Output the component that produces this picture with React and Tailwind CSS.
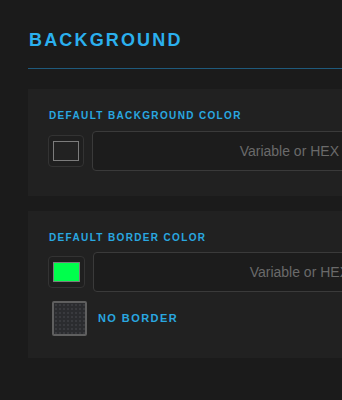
export default function App() {
  return (
    <div
      className="min-h-[400px] w-[342px] overflow-hidden bg-[#1b1b1b] pl-[28px] pt-[31px]"
      style={{ fontFamily: '"Liberation Sans", Arial, sans-serif' }}
    >
      {/* ── Section title ── */}
      <div className="border-b border-[#1f5a7c] pb-[19px] pl-px">
        <h2 className="text-[18px] font-bold leading-[18px] tracking-[0.12em] text-[#2bb0ee]">BACKGROUND</h2>
      </div>

      {/* ── Background color card ── */}
      <div className="mt-[20px] w-[400px] bg-[#212121] pb-[25px] pl-[20px] pt-[21px]">
        <p className="pl-px text-[10px] font-bold leading-[12px] tracking-[0.135em] text-[#29a8e0]">DEFAULT BACKGROUND COLOR</p>
        <div className="mt-[9px] flex items-center gap-[8px]">
          <button className="flex h-[32px] w-[36px] flex-shrink-0 items-center justify-center rounded-[4px] border border-[#333333] bg-[#1f1f1f]">
            <span className="block h-[20px] w-[26px] border border-[#7c7c7c] bg-[#222222]" />
          </button>
          <div className="flex h-[40px] w-[259px] flex-shrink-0 items-center justify-end rounded-[4px] border border-[#3a3a3a] bg-[#1c1c1c] pr-[11px]">
            <span className="text-[14px] text-[#6a6a6a]">Variable or HEX</span>
          </div>
        </div>
      </div>

      {/* ── Border color card ── */}
      <div className="mt-[15px] w-[400px] bg-[#212121] pb-[22px] pl-[20px] pt-[21px]">
        <p className="pl-px text-[10px] font-bold leading-[12px] tracking-[0.135em] text-[#29a8e0]">DEFAULT BORDER COLOR</p>
        <div className="mt-[8px] flex items-center gap-[8px]">
          <button className="flex h-[32px] w-[37px] flex-shrink-0 items-center justify-center rounded-[4px] border border-[#333333] bg-[#1f1f1f]">
            <span className="block h-[20px] w-[27px] border border-[#7c7c7c] bg-[#00ff4c]" />
          </button>
          <div className="flex h-[40px] w-[268px] flex-shrink-0 items-center justify-end rounded-[4px] border border-[#3a3a3a] bg-[#1c1c1c] pr-[11px]">
            <span className="text-[14px] text-[#6a6a6a]">Variable or HEX</span>
          </div>
        </div>
        <label className="ml-[4px] mt-[9px] flex items-center gap-[11px]">
          <span className="block h-[35px] w-[35px] rounded-[2px] border-2 border-[#5f5f5f] bg-[#2b2c2f] bg-[radial-gradient(#393a3e_1px,transparent_1px)] bg-[length:4px_4px]" />
          <span className="text-[11px] font-bold tracking-[0.13em] text-[#29a8e0]">NO BORDER</span>
        </label>
      </div>
    </div>
  );
}
